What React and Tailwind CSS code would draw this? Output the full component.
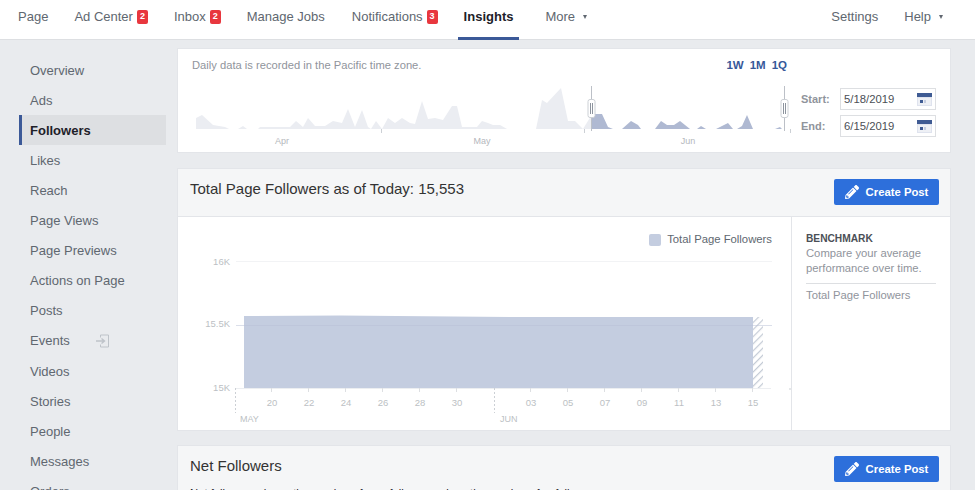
import { FaPencilAlt } from "react-icons/fa";

const NAV_ITEMS = [
  { label: "Page" },
  { label: "Ad Center", badge: 2 },
  { label: "Inbox", badge: 2 },
  { label: "Manage Jobs" },
  { label: "Notifications", badge: 3 },
];

const SIDE_ITEMS = [
  "Overview",
  "Ads",
  "Followers",
  "Likes",
  "Reach",
  "Page Views",
  "Page Previews",
  "Actions on Page",
  "Posts",
  "Events",
  "Videos",
  "Stories",
  "People",
  "Messages",
  "Orders",
];

// x,y points read off the reference, in page pixels
const LIGHT_AREAS = [
  "196,129 196,118 202,115 213,125 225,127 229,129",
  "238,129 243,126 247,129",
  "258,129 260,127 290,127 296,121 303,127 308,118 315,126 325,126 333,121 342,123 348,109 355,127 362,110 368,127 371,129 376,121 382,129 388,118 395,123 402,118 410,123 415,124 422,101 428,119 435,118 443,120 452,106 457,106 462,127 477,127 482,121 488,123 493,125 500,125 507,129",
  "536,129 542,100 547,103 561,88 568,121 575,121 583,129 591,116 591,129",
];

const DARK_AREAS = [
  "591,129 591,114 602,114 608,127 613,129",
  "622,129 631,121 638,125 641,129",
  "655,129 661,121 667,125 674,125 680,121 690,129",
  "697,129 701,126 706,129",
  "716,129 728,123 733,129",
  "737,129 742,126 747,115 753,129",
  "775,129 780,127 782,129",
];

const X_TICKS = [
  ["20", 272],
  ["22", 309],
  ["24", 346],
  ["26", 383],
  ["28", 420],
  ["30", 457],
  ["03", 531],
  ["05", 568],
  ["07", 605],
  ["09", 642],
  ["11", 679],
  ["13", 716],
  ["15", 753],
];

function Caret() {
  return <span className="ml-[8px] inline-block h-0 w-0 border-x-[2.5px] border-t-[4px] border-x-transparent border-t-[#606770]" />;
}

function TopNav() {
  return (
    <div className="flex h-[40px] items-center justify-between border-b border-[#dddfe2] bg-white pl-[18px] pr-[32px] text-[13px] text-[#606770]">
      <div className="flex items-center gap-[26px]">
        {NAV_ITEMS.map((item) => (
          <div key={item.label} className={`flex items-center pb-[5px] ${item.label === "Manage Jobs" ? "pr-[1px]" : ""}`}>
            {item.label}
            {item.badge && (
              <span className="ml-[4px] flex h-[14px] w-[11px] items-center justify-center rounded-[2px] bg-[#e8373e] text-[9px] font-bold text-white">
                {item.badge}
              </span>
            )}
          </div>
        ))}
        <div className="relative flex h-[39px] items-center pb-[5px] font-bold text-[#1d2129]">
          Insights
          <span className="absolute -inset-x-[6px] bottom-[-1px] h-[3px] bg-[#3b5998]" />
        </div>
        <div className="ml-[6px] flex items-center pb-[5px]">
          More
          <Caret />
        </div>
      </div>
      <div className="flex items-center gap-[26px] pb-[5px]">
        <span>Settings</span>
        <div className="flex items-center">
          Help
          <Caret />
        </div>
      </div>
    </div>
  );
}

function Sidebar() {
  return (
    <div className="w-[177px] shrink-0 pl-[19px] pr-[11px] pt-[15px] text-[13px] text-[#606770]">
      {SIDE_ITEMS.map((label) =>
        label === "Followers" ? (
          <div key={label} className="flex h-[30px] items-center border-l-[3px] border-[#3b5998] bg-[#dddfe2] pl-[8px] pt-[2px] font-bold text-[#1d2129]">
            {label}
          </div>
        ) : (
          <div key={label} className={`flex items-center pl-[11px] ${label === "Events" ? "h-[31px]" : "h-[30px] pt-[2px]"}`}>
            {label}
            {label === "Events" && (
              <svg className="ml-[26px]" width="13" height="14" viewBox="0 0 13 14" fill="none" stroke="#bec3c9">
                <path d="M4.5 3.5V1h8v12h-8v-2.5" />
                <path d="M0 7h8M5.5 4.5 8.5 7l-3 2.5" strokeWidth="1.4" />
              </svg>
            )}
          </div>
        )
      )}
    </div>
  );
}

function CalendarIcon() {
  return (
    <svg width="15" height="13" viewBox="0 0 15 13">
      <rect x="0" y="0" width="15" height="13" fill="#dfe3ee" />
      <rect x="0" y="0" width="15" height="4" fill="#3f5b93" />
      <rect x="1" y="5" width="13" height="7" fill="#eef0f5" />
      <rect x="3" y="7" width="3" height="3" fill="#3f5b93" />
      <rect x="7" y="7" width="2" height="3" fill="#c5cde0" />
    </svg>
  );
}

function DateField({ label, value }) {
  return (
    <div className="flex items-center">
      <span className="w-[40px] pl-[1px] text-[11px] font-bold text-[#90949c]">{label}</span>
      <div className="flex h-[22px] w-[96px] items-center justify-between border border-[#dddfe2] pl-[3px] pr-[3px] text-[11.3px] text-[#4b4f56]">
        {value}
        <CalendarIcon />
      </div>
    </div>
  );
}

function Handle({ x }) {
  return (
    <g>
      <line x1={x} x2={x} y1="86" y2="131" stroke="#bcc0c7" />
      <rect x={x - 3.5} y="99.5" width="7" height="18" rx="2" fill="#fff" stroke="#ccd0d5" />
      <line x1={x - 1} x2={x - 1} y1="103" y2="114" stroke="#8d949e" />
      <line x1={x + 1} x2={x + 1} y1="103" y2="114" stroke="#8d949e" />
    </g>
  );
}

function RangeCard() {
  return (
    <div className="flex h-[105px] border border-[#e3e5e9] bg-white pl-[12px]">
      <div className="w-[610px]">
        <div className="flex h-[36px] items-start justify-between pl-[2px] pr-[13px] pt-[8px]">
          <span className="text-[11.2px] text-[#90949c]">Daily data is recorded in the Pacific time zone.</span>
          <div className="flex gap-[6px] text-[11.5px] font-bold text-[#365899]">
            <span>1W</span>
            <span>1M</span>
            <span>1Q</span>
          </div>
        </div>
        <svg className="block" width="610" height="67" viewBox="190 85 610 67">
          {LIGHT_AREAS.map((pts) => (
            <polygon key={pts} points={pts} fill="#ebedf2" />
          ))}
          {DARK_AREAS.map((pts) => (
            <polygon key={pts} points={pts} fill="#afb9d2" />
          ))}
          <line x1="381.5" x2="381.5" y1="129" y2="133" stroke="#ccd0d5" />
          <line x1="584.5" x2="584.5" y1="129" y2="133" stroke="#ccd0d5" />
          <line x1="790.5" x2="790.5" y1="129" y2="133" stroke="#ccd0d5" />
          <Handle x={591.5} />
          <Handle x={784.5} />
          <g fontSize="9" fill="#b4b7bd" textAnchor="middle">
            <text x="282" y="144">Apr</text>
            <text x="482" y="144">May</text>
            <text x="688" y="144">Jun</text>
          </g>
        </svg>
      </div>
      <div className="flex flex-col gap-[5px] pt-[39px]">
        <DateField label="Start:" value="5/18/2019" />
        <DateField label="End:" value="6/15/2019" />
      </div>
    </div>
  );
}

function CreatePost() {
  return (
    <button className="flex h-[26px] w-[105px] items-center justify-center gap-[7px] rounded-[2px] bg-[#2d6fdb] text-[11.3px] font-bold text-white">
      <FaPencilAlt size={14} />
      Create Post
    </button>
  );
}

function FollowersChart() {
  return (
    <svg className="block" width="613" height="181" viewBox="178 250 613 181">
      <defs>
        <pattern id="hatch" width="5" height="5" patternUnits="userSpaceOnUse" patternTransform="rotate(45)">
          <rect width="5" height="5" fill="#fff" />
          <rect width="1.2" height="5" fill="#c4cbd6" />
        </pattern>
      </defs>
      <line x1="236" x2="772" y1="261.5" y2="261.5" stroke="#f2f3f5" />
      <rect x="753" y="317" width="10" height="71" fill="url(#hatch)" />
      <polygon points="244,316 340,315.6 520,317 753,317 753,388 244,388" fill="#c4cde0" />
      <line x1="236" x2="772" y1="325.5" y2="325.5" stroke="#b7c0d6" strokeOpacity="0.5" />
      <line x1="236" x2="771" y1="388.5" y2="388.5" stroke="#eceef1" />
      <circle cx="790" cy="389" r="1" fill="#dddfe2" />
      <line x1="235.5" x2="235.5" y1="388" y2="413" stroke="#ccd0d5" strokeDasharray="2 2" />
      <line x1="494.5" x2="494.5" y1="388" y2="413" stroke="#ccd0d5" strokeDasharray="2 2" />
      <g fontSize="9.5" fill="#bcbfc4" textAnchor="end">
        <text x="230" y="265">16K</text>
        <text x="230" y="327">15.5K</text>
        <text x="230" y="391">15K</text>
      </g>
      <g fontSize="9.5" fill="#bcbfc4" textAnchor="middle">
        {X_TICKS.map(([label, x]) => (
          <g key={label}>
            <line x1={x - 0.5} x2={x - 0.5} y1="388" y2="392" stroke="#dddfe2" />
            <text x={x} y="406">{label}</text>
          </g>
        ))}
      </g>
      <g fontSize="9" fill="#bcbfc4">
        <text x="240" y="422">MAY</text>
        <text x="500" y="422">JUN</text>
      </g>
    </svg>
  );
}

function TotalCard() {
  return (
    <div className="mt-[15px] h-[263px] border border-[#e3e5e9] bg-white">
      <div className="flex h-[48px] items-start justify-between border-b border-[#e3e5e9] bg-[#f5f6f7] pl-[12px] pr-[11px] pt-[10px]">
        <span className="text-[15px] leading-[19px] text-[#333]">Total Page Followers as of Today: 15,553</span>
        <CreatePost />
      </div>
      <div className="flex">
        <div className="w-[613px]">
          <div className="flex h-[33px] items-end justify-end gap-[6px] pb-[4px] pr-[19px] text-[11.3px] leading-[14px] text-[#606770]">
            <span className="h-[12px] w-[12px] rounded-[2px] bg-[#c4cde0]" />
            Total Page Followers
          </div>
          <FollowersChart />
        </div>
        <div className="h-[214px] flex-1 border-l border-[#e3e5e9] px-[14px] pt-[15px] text-[11.25px] leading-[15px] text-[#90949c]">
          <div className="text-[10.2px] font-bold leading-[14px] text-[#4b4f56]">BENCHMARK</div>
          <div>Compare your average performance over time.</div>
          <div className="mt-[7px] border-t border-[#dddfe2] pt-[4px]">Total Page Followers</div>
        </div>
      </div>
    </div>
  );
}

function NetCard() {
  return (
    <div className="mt-[14px] border border-[#e3e5e9] bg-[#f5f6f7] pl-[12px] pr-[11px] pt-[10px]">
      <div className="flex items-start justify-between">
        <span className="text-[15px] leading-[19px] text-[#333]">Net Followers</span>
        <CreatePost />
      </div>
      <div className="mt-[3px] text-[11.25px] leading-[16px] text-[#1d2129]">
        Net followers shows the number of new followers minus the number of unfollows.
      </div>
    </div>
  );
}

export default function App() {
  return (
    <div className="h-[490px] overflow-hidden bg-[#e9ebee] font-['Liberation_Sans',Arial,sans-serif]">
      <TopNav />
      <div className="flex">
        <Sidebar />
        <div className="w-[774px] pt-[8px]">
          <RangeCard />
          <TotalCard />
          <NetCard />
        </div>
      </div>
    </div>
  );
}
